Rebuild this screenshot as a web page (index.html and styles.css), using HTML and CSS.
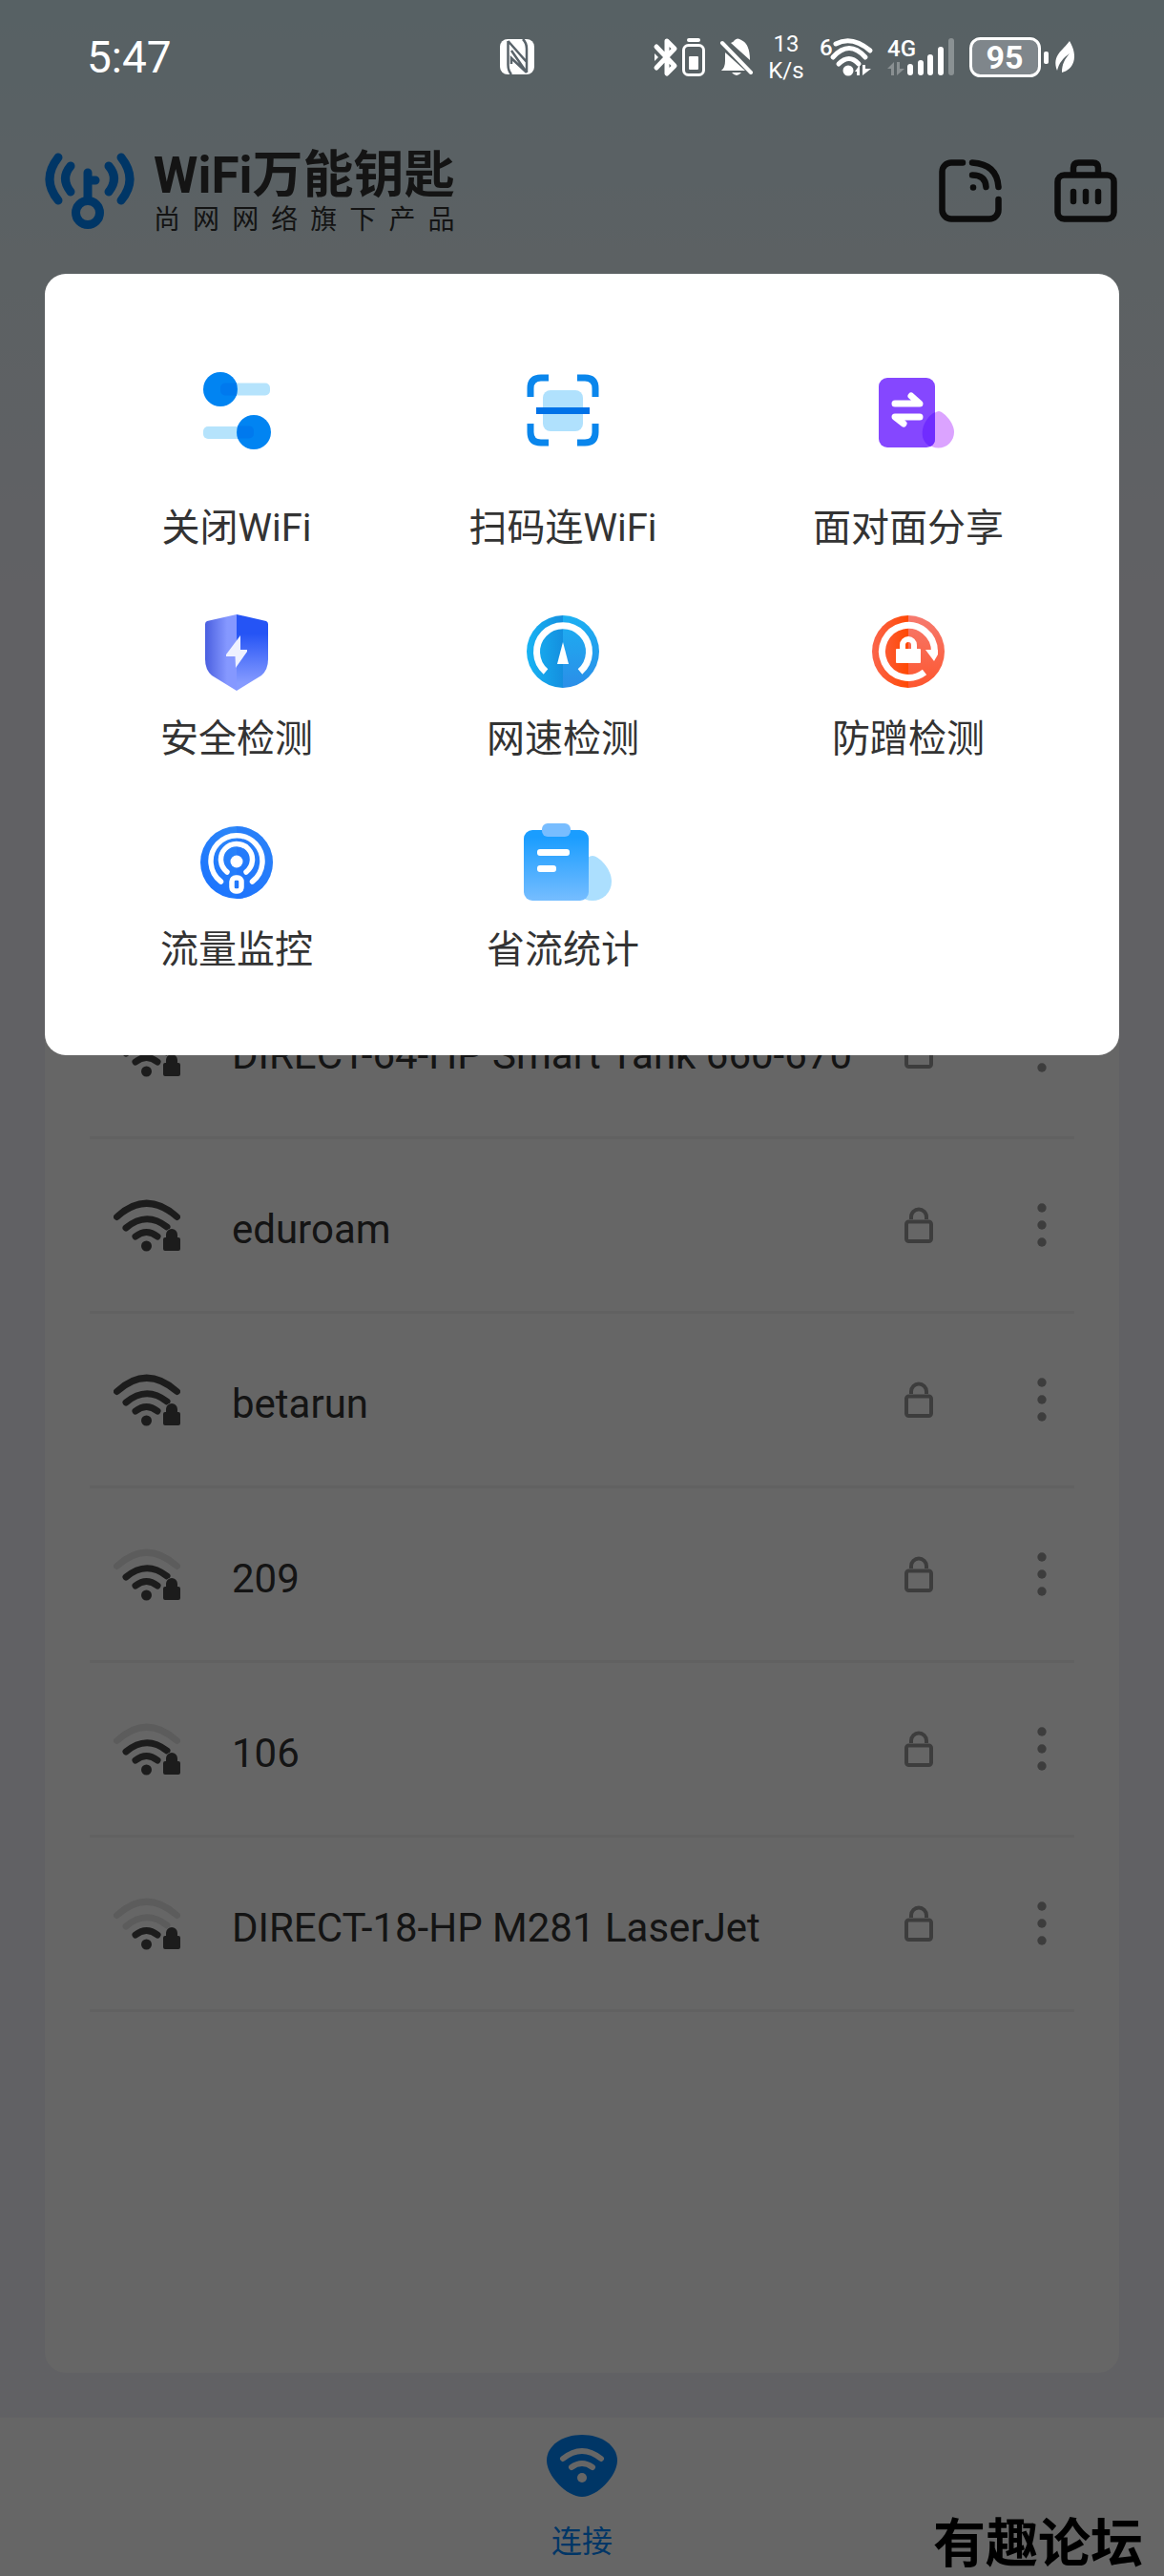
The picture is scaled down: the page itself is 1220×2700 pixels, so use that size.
FILE: index.html
```html
<!DOCTYPE html>
<html lang="zh-CN">
<head>
    <meta charset="UTF-8">
    <meta name="viewport" content="width=device-width, initial-scale=1.0">
    <title>WiFi万能钥匙</title>
    <link rel="stylesheet" href="styles.css">
</head>
<body>
    <!-- Shared icons -->
    <svg class="sprite" width="0" height="0" aria-hidden="true">
        <symbol id="wifi-base" viewBox="0 0 70 55">
            <path class="arc" d="M23 39Q34.500 30 46 39"/>
            <circle cx="34.500" cy="49" r="5.500"/>
            <path class="lock-edge" d="M52 42a2 2 0 0 1 2-2h1v-2a6 6 0 0 1 12 0v2h1a2 2 0 0 1 2 2v10a2 2 0 0 1-2 2H54a2 2 0 0 1-2-2z"/>
            <path d="M52 42a2 2 0 0 1 2-2h1v-3a6 6 0 0 1 12 0v3h1a2 2 0 0 1 2 2v10a2 2 0 0 1-2 2H54a2 2 0 0 1-2-2zM59 40h4v-3a2 2 0 0 0-4 0z" fill-rule="evenodd"/>
        </symbol>
        <symbol id="wifi-4" viewBox="0 0 70 55">
            <path class="arc" d="M3.500 18.500Q34.500-10 66.500 18.500"/>
            <path class="arc" d="M13 30Q34.500 12 56 29"/>
            <use href="#wifi-base"/>
        </symbol>
        <symbol id="wifi-3" viewBox="0 0 70 55">
            <path class="arc faint" d="M3.500 18.500Q34.500-10 66.500 18.500"/>
            <path class="arc" d="M13 30Q34.500 12 56 29"/>
            <use href="#wifi-base"/>
        </symbol>
        <symbol id="wifi-2" viewBox="0 0 70 55">
            <path class="arc faint" d="M3.500 18.500Q34.500-10 66.500 18.500"/>
            <path class="arc faint" d="M13 30Q34.500 12 56 29"/>
            <use href="#wifi-base"/>
        </symbol>
        <symbol id="lock" viewBox="0 0 30 38">
            <rect x="2" y="15.500" width="26" height="20.500" rx="2.500"/>
            <path d="M7 13v-2.500a8 8 0 0 1 16 0V13"/>
        </symbol>
        <symbol id="dots" viewBox="0 0 10 46">
            <circle cx="5" cy="5" r="4.700"/>
            <circle cx="5" cy="23" r="4.700"/>
            <circle cx="5" cy="41" r="4.700"/>
        </symbol>
    </svg>

    <div class="screen">
        <div class="status-bar">
            <span class="time">5:47</span>
            <svg class="nfc" width="36" height="38" viewBox="0 0 36 38">
                <rect x="0" y="0" width="36" height="37" rx="8" fill="#fff"/>
                <path d="M8.500 2v25q0 6 3.500 10M8.500 2L28 24V12M28 35V10q0-6-4-10M28 35L12 20v6M28 35L12 12" fill="none" stroke="#59636a" stroke-width="2.500"/>
            </svg>
            <div class="status-icons">
                <svg width="53" height="42" viewBox="0 0 53 42">
                    <path d="M2 10l19 20-8 8V4l8 8L2 32" fill="none" stroke="#fff" stroke-width="5" stroke-linejoin="round" stroke-linecap="round"/>
                    <path d="M0 17l4 4-4 4z" fill="#fff"/>
                    <rect x="34" y="1" width="14" height="4" rx="2" fill="#fff"/>
                    <rect x="30.500" y="8.500" width="21" height="31" rx="5" fill="none" stroke="#fff" stroke-width="3"/>
                    <rect x="36" y="20" width="10" height="14" rx="1" fill="#fff"/>
                </svg>
                <svg width="34" height="42" viewBox="0 0 34 42">
                    <path d="M1 35q4-3 4-10v-9L26 35zM11 6q3-1 4-3 3-3 7 0 9 4 9 21z" fill="#fff"/>
                    <path d="M2 6l30 31" stroke="#fff" stroke-width="4" stroke-linecap="round"/>
                    <path d="M12 37h10q-5 6-10 0z" fill="#fff"/>
                </svg>
                <div class="net-speed"><span>13</span><span>K/s</span></div>
                <svg width="55" height="42" viewBox="0 0 55 42">
                    <text class="mark" x="0" y="19">6</text>
                    <g fill="none" stroke="#fff" stroke-width="5" stroke-linecap="round">
                        <path d="M17 7Q34-2 53 14"/>
                        <path d="M14 21Q31 2 48 21"/>
                        <path d="M20 28Q31 17 41 28"/>
                    </g>
                    <circle cx="30" cy="35" r="5.500" fill="#fff"/>
                    <path d="M37 36l5-7v11h-3v-4zM45 40V29h3v4h6z" fill="#fff"/>
                </svg>
                <svg width="70" height="42" viewBox="0 0 70 42">
                    <text class="mark" x="0" y="20">4G</text>
                    <path d="M0 33l7-7v14H4v-7zM10 40V26h3v7h5z" fill="#fff" opacity=".3"/>
                    <g stroke="#fff" stroke-width="6" stroke-linecap="round">
                        <path d="M24 31v6M35 27v10M45 21v16M56 13v24"/>
                        <path d="M67 4v33" opacity=".3"/>
                    </g>
                </svg>
                <svg width="111" height="44" viewBox="0 0 111 44">
                    <rect x="1.500" y="2.500" width="72" height="39" rx="10" fill="#7f868b" stroke="#fff" stroke-width="3"/>
                    <text class="charge" x="37" y="34" text-anchor="middle">95</text>
                    <rect x="78" y="16" width="5" height="13" rx="2" fill="#fff"/>
                    <path d="M92 36C86 20 98 15 105 5c10 17 4 30-8 33 0-9 3-14 8-20-7 5-11 10-13 18z" fill="#fff"/>
                </svg>
            </div>
        </div>

        <header class="app-header">
            <svg class="logo" width="94" height="82" viewBox="0 0 94 82" fill="none" stroke="#0288ff" stroke-width="9" stroke-linecap="round">
                <path d="M14 6Q-4 29 14 51M80 6Q98 29 80 51M27 15Q16 28 27 42M67 15Q78 28 67 42"/>
                <circle cx="45" cy="64" r="12.500"/>
                <path d="M45 51V22M47 30h6"/>
            </svg>
            <div class="brand">
                <h1>WiFi万能钥匙</h1>
                <p>尚网网络旗下产品</p>
            </div>
            <div class="header-actions">
                <button type="button" aria-label="分享热点">
                    <svg width="66" height="66" viewBox="0 0 66 66" fill="none" stroke="#1e1e1e" stroke-width="6.500" stroke-linecap="round">
                        <path d="M25 3.500H13A9.500 9.500 0 0 0 3.500 13v40A9.500 9.500 0 0 0 13 62.500h40A9.500 9.500 0 0 0 62.500 53V42M35 3.500Q61 5 62.500 29M35 16.500q14 0 14.500 12.500"/>
                        <path d="M36 29.500h0"/>
                    </svg>
                </button>
                <button type="button" aria-label="工具箱">
                    <svg width="66" height="66" viewBox="0 0 66 66" fill="none" stroke="#1e1e1e" stroke-width="6.500" stroke-linecap="round">
                        <rect x="3.500" y="16.500" width="59" height="46" rx="7"/>
                        <path d="M20 15V9q0-5.500 5.500-5.500h15Q46 3.500 46 9v6M20 34v10M33 34v10M46 34v10"/>
                    </svg>
                </button>
            </div>
        </header>

        <main class="network-card">
            <ul class="network-list">
                <li>
                    <svg class="signal" width="70" height="55"><use href="#wifi-3"/></svg>
                    <span class="ssid">DIRECT-64-HP Smart Tank 660-670</span>
                    <svg class="lock" width="30" height="38"><use href="#lock"/></svg>
                    <button type="button" aria-label="更多"><svg width="10" height="46"><use href="#dots"/></svg></button>
                </li>
                <li>
                    <svg class="signal" width="70" height="55"><use href="#wifi-4"/></svg>
                    <span class="ssid">eduroam</span>
                    <svg class="lock" width="30" height="38"><use href="#lock"/></svg>
                    <button type="button" aria-label="更多"><svg width="10" height="46"><use href="#dots"/></svg></button>
                </li>
                <li>
                    <svg class="signal" width="70" height="55"><use href="#wifi-4"/></svg>
                    <span class="ssid">betarun</span>
                    <svg class="lock" width="30" height="38"><use href="#lock"/></svg>
                    <button type="button" aria-label="更多"><svg width="10" height="46"><use href="#dots"/></svg></button>
                </li>
                <li>
                    <svg class="signal" width="70" height="55"><use href="#wifi-3"/></svg>
                    <span class="ssid">209</span>
                    <svg class="lock" width="30" height="38"><use href="#lock"/></svg>
                    <button type="button" aria-label="更多"><svg width="10" height="46"><use href="#dots"/></svg></button>
                </li>
                <li>
                    <svg class="signal" width="70" height="55"><use href="#wifi-3"/></svg>
                    <span class="ssid">106</span>
                    <svg class="lock" width="30" height="38"><use href="#lock"/></svg>
                    <button type="button" aria-label="更多"><svg width="10" height="46"><use href="#dots"/></svg></button>
                </li>
                <li>
                    <svg class="signal" width="70" height="55"><use href="#wifi-2"/></svg>
                    <span class="ssid">DIRECT-18-HP M281 LaserJet</span>
                    <svg class="lock" width="30" height="38"><use href="#lock"/></svg>
                    <button type="button" aria-label="更多"><svg width="10" height="46"><use href="#dots"/></svg></button>
                </li>
            </ul>
        </main>

        <nav class="tab-bar">
            <a href="#connect">
                <svg width="76" height="66" viewBox="0 0 76 66">
                    <path d="M38 0C58 0 75 11 75 27 75 43 54 65 38 65 22 65 1 43 1 27 1 11 18 0 38 0z" fill="#0288ff"/>
                    <g fill="none" stroke="#fff" stroke-width="6" stroke-linecap="round">
                        <path d="M18 25Q38 9 58 25M27 34Q38 26 49 34"/>
                    </g>
                    <circle cx="38" cy="45" r="5" fill="#fff"/>
                </svg>
                <span>连接</span>
            </a>
        </nav>

        <!-- Tool menu -->
        <div class="overlay">
            <div class="tool-panel" role="dialog" aria-label="工具">
                <button type="button" class="tool first-row">
                    <svg width="96" height="96" viewBox="0 0 96 96">
                        <rect x="28" y="19.500" width="55" height="13" rx="5" fill="#b5e3fc"/>
                        <rect x="13" y="65" width="55" height="13" rx="5" fill="#b5e3fc"/>
                        <circle cx="31" cy="26" r="18" fill="#0184f2"/>
                        <circle cx="66" cy="71" r="18" fill="#0184f2"/>
                        <path d="M48 19.500H36a5 5 0 0 0-5 5v3a5 5 0 0 0 5 5h12zM49 64.500h12a5 5 0 0 1 5 5v3a5 5 0 0 1-5 5H49z" fill="#0079ee"/>
                    </svg>
                    <span>关闭WiFi</span>
                </button>
                <button type="button" class="tool first-row">
                    <svg width="96" height="96" viewBox="0 0 96 96">
                        <rect x="27" y="27" width="42" height="43" rx="8" fill="#b0e1fd"/>
                        <path d="M33 14H25Q14 14 14 25V34M63 14H71Q82 14 82 25V34M33 82H25Q14 82 14 71V62M63 82H71Q82 82 82 71V62" fill="none" stroke="#0a86ec" stroke-width="7"/>
                        <rect x="20" y="45" width="56" height="7" fill="#0072e8"/>
                    </svg>
                    <span>扫码连WiFi</span>
                </button>
                <button type="button" class="tool first-row">
                    <svg width="96" height="96" viewBox="0 0 96 96">
                        <path d="M80 49C84 49 96 60 96 71A16.500 16.500 0 0 1 63 71C63 60 76 49 80 49z" fill="#dba3ff"/>
                        <rect x="17" y="14" width="59" height="73" rx="9" fill="#8547ff"/>
                        <path d="M76 50V78Q76 84 71 86C61 81 61 69 66 60Q71 52 76 50z" fill="#702cff"/>
                        <path d="M34 41H60L51 33M60 55H34L43 62" fill="none" stroke="#fff" stroke-width="7" stroke-linecap="round" stroke-linejoin="round"/>
                    </svg>
                    <span>面对面分享</span>
                </button>

                <button type="button" class="tool">
                    <svg width="96" height="96" viewBox="0 0 96 96">
                        <defs>
                            <linearGradient id="shield-left"><stop offset="0" stop-color="#4a5fe0"/><stop offset=".7" stop-color="#8598ff"/></linearGradient>
                            <linearGradient id="shield-right" x2="0" y2="1"><stop offset=".25" stop-color="#2554f5"/><stop offset=".9" stop-color="#869bff"/></linearGradient>
                        </defs>
                        <path d="M48 9L17 16Q15 17 15 19V56Q15 67 22 73L48 89z" fill="url(#shield-left)"/>
                        <path d="M48 9L79 16Q81 17 81 19V56Q81 67 74 73L48 89z" fill="url(#shield-right)"/>
                        <path d="M52 31L37 51V53H46.500L47 65 59 48V46H52z" fill="#eef1ff"/>
                    </svg>
                    <span>安全检测</span>
                </button>
                <button type="button" class="tool">
                    <svg width="96" height="96" viewBox="0 0 96 96">
                        <defs>
                            <linearGradient id="gauge-left"><stop offset="0" stop-color="#18b4f4"/><stop offset="1" stop-color="#148fdf"/></linearGradient>
                            <linearGradient id="gauge-right" x2="0" y2="1"><stop offset="0" stop-color="#1cb0f2"/><stop offset="1" stop-color="#2b8ee8"/></linearGradient>
                        </defs>
                        <path d="M48 10a38 38 0 0 0 0 76z" fill="url(#gauge-left)"/>
                        <path d="M48 10a38 38 0 0 1 0 76z" fill="url(#gauge-right)"/>
                        <path d="M30 69A27.500 27.500 0 1 1 66 69" fill="none" stroke="#fff" stroke-width="7"/>
                        <path d="M48 38L54 61H42z" fill="#fff"/>
                    </svg>
                    <span>网速检测</span>
                </button>
                <button type="button" class="tool">
                    <svg width="96" height="96" viewBox="0 0 96 96">
                        <defs>
                            <linearGradient id="guard-left"><stop offset="0" stop-color="#fb654c"/><stop offset="1" stop-color="#ff4803"/></linearGradient>
                            <linearGradient id="guard-right" x2="0" y2="1"><stop offset="0" stop-color="#f67a6f"/><stop offset="1" stop-color="#fd562e"/></linearGradient>
                        </defs>
                        <path d="M48 10a38 38 0 0 0 0 76z" fill="url(#guard-left)"/>
                        <path d="M48 10a38 38 0 0 1 0 76z" fill="url(#guard-right)"/>
                        <path d="M65 69.500A27.500 27.500 0 1 1 75.500 48" fill="none" stroke="#fff" stroke-width="7"/>
                        <path d="M66 46H79V51L75 58z" fill="#fff"/>
                        <rect x="35" y="45" width="26" height="15" rx="1" fill="#fff"/>
                        <path d="M42 46V41a6 6 0 0 1 12 0V46" fill="none" stroke="#fff" stroke-width="6"/>
                    </svg>
                    <span>防蹭检测</span>
                </button>

                <button type="button" class="tool">
                    <svg width="96" height="96" viewBox="0 0 96 96">
                        <defs>
                            <linearGradient id="monitor" x1="0" y1="1" x2="1" y2="0"><stop offset="0" stop-color="#1870ff"/><stop offset="1" stop-color="#3590f6"/></linearGradient>
                        </defs>
                        <circle cx="48" cy="48" r="38" fill="url(#monitor)"/>
                        <path d="M48 10a38 38 0 0 1 0 76z" fill="#1c6efb" opacity=".35"/>
                        <g fill="none" stroke="#fff" stroke-width="5.500" stroke-linecap="round">
                            <path d="M31.500 68A27 27 0 1 1 64.500 68M38 58A16.500 16.500 0 1 1 58 58"/>
                            <rect x="43" y="64" width="10" height="14" rx="4"/>
                        </g>
                        <circle cx="48" cy="47" r="6.500" fill="#fff"/>
                    </svg>
                    <span>流量监控</span>
                </button>
                <button type="button" class="tool">
                    <svg width="96" height="96" viewBox="0 0 96 96">
                        <defs>
                            <linearGradient id="clipboard" x2="0" y2="1"><stop offset=".1" stop-color="#1a9dff"/><stop offset="1" stop-color="#76bdff"/></linearGradient>
                        </defs>
                        <path d="M79 41C85 41 99 54 99 68A20 20 0 0 1 59 68C59 54 73 41 79 41z" fill="#acdffe"/>
                        <rect x="7" y="14" width="68" height="74" rx="9" fill="url(#clipboard)"/>
                        <rect x="26" y="7" width="30" height="14" rx="6" fill="#78bdff"/>
                        <rect x="21" y="34" width="34" height="7" rx="3" fill="#fff"/>
                        <rect x="21" y="51" width="20" height="7" rx="3" fill="#fff"/>
                    </svg>
                    <span>省流统计</span>
                </button>
            </div>
        </div>

        <span class="watermark">有趣论坛</span>
    </div>
</body>
</html>
```
FILE: styles.css
```css
* {
    box-sizing: border-box;
}
body {
    margin: 0;
    font-family: Roboto, "Noto Sans CJK SC", sans-serif;
    color: #333;
}
h1, p, ul {
    margin: 0;
    padding: 0;
}
button {
    padding: 0;
    border: none;
    background: none;
    font: inherit;
    color: inherit;
    cursor: pointer;
}
svg {
    display: block;
    flex: none;
    overflow: visible;
}
.sprite {
    position: absolute;
}
.screen {
    position: relative;
    display: flex;
    flex-direction: column;
    min-height: 100vh;
    background: linear-gradient(#d9f3fb, #e6f3f8 280px, #f3f3fa 640px);
}

/* Status bar stays bright above the overlay */
.status-bar {
    position: relative;
    z-index: 2;
    display: flex;
    align-items: center;
    height: 120px;
    padding: 0 93px 0 91px;
    color: #fff;
}
.time {
    flex: 1;
    font-size: 46px;
}
.nfc {
    margin-right: 126px;
}
.status-icons {
    display: flex;
    align-items: center;
    gap: 16px;
}
.net-speed {
    display: flex;
    flex-direction: column;
    width: 38px;
    font-size: 24px;
    line-height: 28px;
    text-align: center;
}
.mark {
    font-size: 24px;
    font-weight: 500;
    fill: #fff;
}
.charge {
    font-size: 34px;
    font-weight: 700;
    fill: #fff;
}

.app-header {
    display: flex;
    align-items: center;
    height: 160px;
    padding: 0 49px 0 47px;
}
.brand {
    margin-left: 20px;
}
.brand h1 {
    font-size: 53px;
    font-weight: 700;
    line-height: 62px;
}
.brand p {
    font-size: 28px;
    line-height: 32px;
    text-align-last: justify;
}
.header-actions {
    display: flex;
    gap: 55px;
    margin-left: auto;
}

.network-card {
    flex: 1;
    display: flex;
    flex-direction: column;
    justify-content: flex-end;
    margin: 8px 47px 47px;
    padding: 0 47px 378px;
    background: #fff;
    border-radius: 22px;
}
.network-list {
    list-style: none;
}
.network-list li {
    display: flex;
    align-items: center;
    height: 183px;
    padding: 0 29px 0 25px;
    border-bottom: 3px solid #f3f3f3;
}
.signal {
    fill: #484848;
}
.arc {
    fill: none;
    stroke: #484848;
    stroke-width: 7;
    stroke-linecap: round;
}
.faint {
    stroke: #e6e6e6;
}
.lock-edge {
    stroke: #fff;
    stroke-width: 3;
}
.ssid {
    flex: 1;
    margin-left: 54px;
    padding-top: 8px;
    font-size: 42px;
}
.lock {
    margin-right: 109px;
    fill: none;
    stroke: #999;
    stroke-width: 4;
}
.network-list button {
    fill: #999;
}

.tab-bar {
    display: flex;
    justify-content: center;
    height: 166px;
    padding-top: 18px;
    background: #fff;
}
.tab-bar a {
    display: flex;
    flex-direction: column;
    align-items: center;
    gap: 21px;
    font-size: 32px;
    line-height: 50px;
    color: #0288ff;
    text-decoration: none;
}

.overlay {
    position: absolute;
    inset: 0;
    padding: 287px 47px 0;
    background: rgba(0, 0, 0, 0.6);
}
.tool-panel {
    display: grid;
    grid-template-columns: repeat(3, auto);
    justify-content: space-between;
    row-gap: 51px;
    padding: 95px 121px 80px;
    background: #fff;
    border-radius: 22px;
}
.tool {
    display: flex;
    flex-direction: column;
    align-items: center;
    gap: 14px;
    font-size: 40px;
    line-height: 60px;
}
.first-row {
    gap: 46px;
}

.watermark {
    position: absolute;
    right: 22px;
    bottom: 4px;
    z-index: 3;
    font-size: 55px;
    font-weight: 700;
    line-height: 60px;
    color: #000;
}
```
